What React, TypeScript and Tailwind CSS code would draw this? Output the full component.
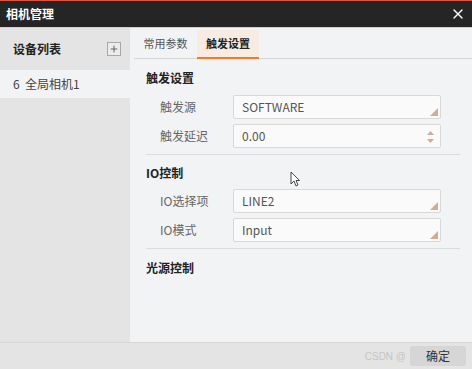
import React from 'react';
import { X, Plus } from 'lucide-react';

const font = { fontFamily: '"Noto Sans CJK SC", "Noto Sans", sans-serif' };

function Corner() {
  return (
    <svg className="absolute right-[2px] bottom-[2px]" width="8" height="8" viewBox="0 0 8 8">
      <polygon points="8,0 8,8 0,8" fill="#d2ab93" />
    </svg>
  );
}

function Spinner() {
  return (
    <svg className="absolute right-[6px] top-[6px]" width="7" height="12" viewBox="0 0 7 12">
      <polygon points="3.5,0 7,4 0,4" fill="#d2ab93" />
      <polygon points="0,8 7,8 3.5,12" fill="#d2ab93" />
    </svg>
  );
}

function Field({ label, value, spin }: { label: string; value: string; spin?: boolean }) {
  return (
    <div className="flex items-center h-[24px]">
      <div className="w-[87px] pl-[14px] text-[12px] text-[#666]">{label}</div>
      <div className="relative w-[208px] h-[24px] bg-[#fafafa] border border-[#d8d8d8] rounded-[2px] flex items-center pl-[8px] text-[12px] text-[#555]">
        {value}
        {spin ? <Spinner /> : <Corner />}
      </div>
    </div>
  );
}

export default function App() {
  return (
    <div className="w-[472px] h-[369px] flex flex-col overflow-hidden bg-[#f2f3f5]" style={font}>
      <div className="h-[28px] bg-[#252525] border-t border-[#e0533e] border-b border-b-[#cfcfcf] flex items-center justify-between pl-[6px] pr-[6px]">
        <span className="text-white text-[12px] font-bold">相机管理</span>
        <X className="w-[16px] h-[16px] text-white" strokeWidth={2} />
      </div>

      <div className="flex flex-1 min-h-0">
        <div className="w-[130px] bg-[#e4e4e5] flex flex-col">
          <div className="h-[42px] flex items-center justify-between pl-[13px] pr-[9px]">
            <span className="text-[12px] font-bold text-[#222]">设备列表</span>
            <div className="w-[14px] h-[14px] border border-[#a8a8a8] bg-[#ececec] flex items-center justify-center">
              <Plus className="w-[10px] h-[10px] text-[#666]" strokeWidth={2.5} />
            </div>
          </div>
          <div className="h-[28px] bg-[#f2f3f5] flex items-center pl-[13px] text-[12px] text-[#444]">
            6&nbsp;&nbsp;全局相机1
          </div>
        </div>

        <div className="flex-1 relative flex flex-col">
          <div className="h-[31px] flex items-end pl-[4px] pt-[1px]">
            <div className="flex-1 flex items-end border-b border-[#d6d6d6]">
              <div className="h-[29px] w-[63px] flex items-center justify-center text-[11px] text-[#555]">常用参数</div>
              <div className="h-[29px] w-[62px] flex items-center justify-center text-[11px] font-bold text-[#222] bg-[#f8ebe2] border-b-2 border-[#f07c2a] -mb-px">
                触发设置
              </div>
            </div>
          </div>

          <div className="pl-[16px] pr-[12px] flex flex-col">
            <div className="h-[36px] pt-[2px] flex items-center text-[12px] font-bold text-[#222]">触发设置</div>
            <div className="flex flex-col gap-[5px]">
              <Field label="触发源" value="SOFTWARE" />
              <Field label="触发延迟" value="0.00" spin />
            </div>
            <div className="h-px bg-[#dcdcdc] mt-[6px]" />
            <div className="h-[34px] pt-[1px] flex items-center text-[12px] font-bold text-[#222]">IO控制</div>
            <div className="flex flex-col gap-[5px]">
              <Field label="IO选择项" value="LINE2" />
              <Field label="IO模式" value="Input" />
            </div>
            <div className="h-px bg-[#dcdcdc] mt-[6px]" />
            <div className="h-[38px] flex items-center text-[12px] font-bold text-[#222]">光源控制</div>
          </div>

          <svg className="absolute left-[160px] top-[143px]" width="10" height="16" viewBox="0 0 10 16">
            <path d="M1 1 L1 13 L4 10 L6 15 L8 14 L6 9.5 L9.5 9.5 Z" fill="#fff" stroke="#333" strokeWidth="0.9" />
          </svg>
        </div>
      </div>

      <div className="h-[27px] bg-[#e4e4e5] border-t border-[#d6d6d6] flex items-center justify-end pr-[6px] relative">
        <span className="text-[10px] text-[#c4c4c4] mr-[4px]" style={{ fontFamily: '"Liberation Sans", sans-serif' }}>CSDN @</span>
        <div className="w-[56px] h-[20px] bg-[#d6d6d6] rounded-[2px] flex items-center justify-center text-[12px] text-[#333]">确定</div>
      </div>
    </div>
  );
}
